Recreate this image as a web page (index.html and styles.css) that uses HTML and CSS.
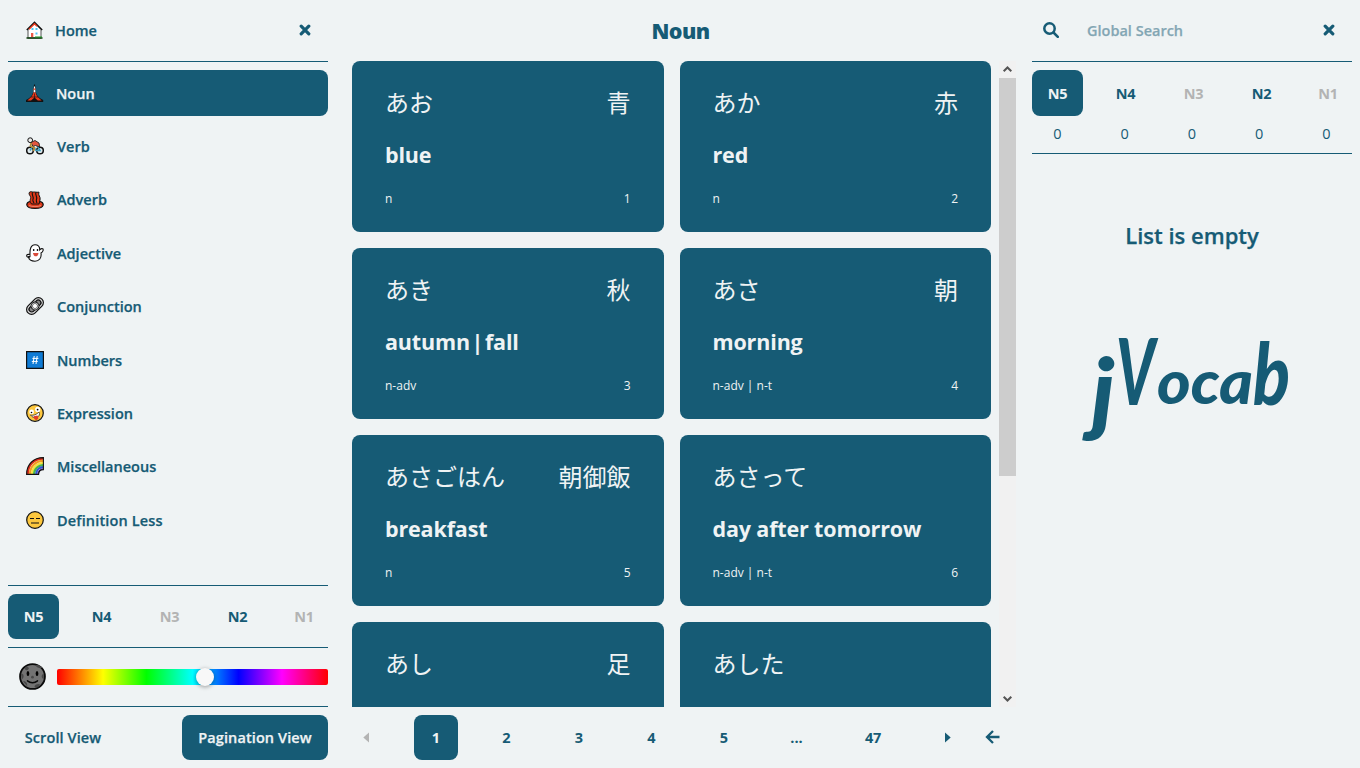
FILE: index.html
```html
<!DOCTYPE html>
<html lang="en">
<head>
<meta charset="utf-8">
<title>jVocab</title>
<link rel="stylesheet" href="styles.css">
</head>
<body>
<div class="app">
  <aside class="side">
    <header class="bar">
      <span class="emoji house"><svg viewBox="0 0 18 18"><path d="M2 8.500V17h13V8.500L8.500 2z" fill="#fff" stroke="#555" stroke-width="1"/><path d="M.8 9 8.500 1.200 16.200 9" fill="none" stroke="#111" stroke-width="1.500"/><path d="M3 8.200 8.500 2.700 11 5.200" fill="none" stroke="#ea3b1f" stroke-width="1.500"/><path d="M5.500 7h2v2h-2zM9.500 7h2v2h-2zM9.500 11.500h2v2h-2z" fill="#4fc8f5"/><path d="M5 12h2.300v4H5z" fill="#ea5a47"/><path d="M.5 17h16" stroke="#123f12" stroke-width="1.600"/><path d="M9 16h7" stroke="#1b9a22" stroke-width="1"/></svg></span>
      <span class="label home">Home</span>
      <svg class="close" viewBox="0 0 12 12"><path d="M2.200 2.200l7.600 7.600M9.800 2.200 2.200 9.800"/></svg>
    </header>
    <nav class="nav">
      <a class="item active"><span class="emoji"><svg viewBox="0 0 18 18"><path d="M8 .5h1l.9 8c.6 3 3.500 5.500 7.300 7.500v2H0v-2c3.800-2 6.500-4.500 7.100-7.500z" fill="#111"/><path d="M8 2.500h1l.5 6H7.500z" fill="#fff"/><path d="M7.500 4.500h2v1.300h-2z" fill="#e8381c"/><path d="M7.400 8.500h2.200c.5 3 2.800 5.500 6 8h-3.800L8.500 13.500 5 16.500H1.400c3.200-2.500 5.500-5 6-8z" fill="#e8381c"/><path d="M8.500 9.500v5M4.800 13h7.400" stroke="#111" stroke-width=".6"/></svg></span><span class="label noun">Noun</span></a>
      <a class="item"><span class="emoji"><svg viewBox="0 0 18 18"><circle cx="4" cy="13.500" r="3.300" fill="#dfe9ec" stroke="#111" stroke-width="1.500"/><circle cx="14" cy="13.500" r="3.300" fill="#dfe9ec" stroke="#111" stroke-width="1.500"/><path d="M4 13.500 7 9l3 4.500h4l-3-5" fill="none" stroke="#3f9fc0" stroke-width="1.500"/><path d="M5 5.500 9 3.500l4 2.500.7 4-4.200-1.500-2.500 1z" fill="#e2563f" stroke="#222" stroke-width=".9"/><path d="M5.300 5.500 4.500 9l4 2-1 3" fill="none" stroke="#b58a35" stroke-width="1.800"/><circle cx="4.200" cy="3.200" r="2.400" fill="#eee" stroke="#111"/></svg></span><span class="label">Verb</span></a>
      <a class="item"><span class="emoji"><svg viewBox="0 0 18 18"><path d="M4 10.500C1.500 11 .7 12.500.8 14c.4 2 4 3.400 8.200 3.400s7.800-1.400 8.200-3.400c.1-1.500-.8-3-3.200-3.500" fill="#df3919" stroke="#111" stroke-width="1.200"/><path d="M3.500 1.200c2-1.200 2.300 0 4-.2s2.500.5 5.500.2c-1.500 2.800 2 4.500 1 7.800L13 13H5.500c-3-4 0-5-1-7.300C3.600 4 2.400 2.600 3.500 1.200z" fill="#df3919" stroke="#111"/><path d="M6.500 1.300c-1.500 3 2 4 .4 7.500C6.500 10 7.500 11 8 12M10 1.300c-1.500 3 2 4 .4 7.500-.4 1.200.2 2 .6 3.200" fill="none" stroke="#111" stroke-width="1.100"/><path d="M3 14.500c3 1.500 9 1.500 12 0" fill="none" stroke="#f1a08c" stroke-width=".7"/></svg></span><span class="label adverb">Adverb</span></a>
      <a class="item"><span class="emoji"><svg viewBox="0 0 18 18"><path d="M9 .8c3 0 4.700 2 4.700 5 .8-.8 2-1.500 3-1 .9.600.600 2.700-1.700 4.200.800 5-2 8.200-6 8.200-3.500 0-6-1.200-6.500-4-1.500.2-2.200-1.200-1.600-2.300.600-.9 2.300-.4 3.100-.6C3.700 5 5 .8 9 .8z" fill="#fff" stroke="#111" stroke-width="1.100"/><path d="M1.500 12c1 .5 2-.4 3-1.500v2.500L3 14z" fill="#111"/><ellipse cx="7.700" cy="6" rx=".8" ry="1.100"/><ellipse cx="11.500" cy="6" rx=".8" ry="1.100"/><path d="M7 9h5.500c-.2 2-1.200 3.300-2.700 3.300S7.200 11 7 9z" fill="#d94b3b"/></svg></span><span class="label">Adjective</span></a>
      <a class="item"><span class="emoji"><svg viewBox="0 0 18 18"><g transform="rotate(-45 9 9)"><rect x="-.8" y="4" width="19.600" height="10" rx="5" fill="#ddd" stroke="#111" stroke-width="1.200"/><rect x="1.700" y="6.300" width="14.600" height="5.400" rx="2.700" fill="#888" stroke="#111" stroke-width="1.300"/><circle cx="9" cy="9" r="3.900" fill="#ddd" stroke="#111" stroke-width="1"/><circle cx="9" cy="9" r="2.500" fill="#fff" stroke="#333" stroke-width=".6"/></g></svg></span><span class="label">Conjunction</span></a>
      <a class="item"><span class="emoji"><svg viewBox="0 0 18 18"><path d="M.6.6h16.800v16.800H.6z" fill="#0f7bd5" stroke="#111" stroke-width="1.200"/><path d="M8.200 5 7 13M11.200 5 10 13M6.400 7.400h6M5.800 10.400h6" stroke="#fff" stroke-width="1"/></svg></span><span class="label">Numbers</span></a>
      <a class="item"><span class="emoji"><svg viewBox="0 0 18 18"><circle cx="9" cy="9" r="8.300" fill="#fcc73e" stroke="#111" stroke-width="1.200"/><path d="M4.500 11c3 1 6-.5 8.500-3 1.200 2.200.2 4.200-1.700 5.300-2.300 1-5 .3-6.800-2.300z" fill="#fff" stroke="#222" stroke-width=".7"/><path d="M7.500 12.300l4-.8c1 1.700 1.300 3.500-.5 4.200-2.200.8-3.200-1-3.500-3.400z" fill="#e23c28"/><circle cx="5.600" cy="7.900" r="2.400" fill="#fff"/><circle cx="11.700" cy="5.400" r="2.600" fill="#fff"/><circle cx="5.500" cy="8.500" r=".8"/><circle cx="11.600" cy="5.600" r=".9"/></svg></span><span class="label">Expression</span></a>
      <a class="item"><span class="emoji"><svg viewBox="0 0 18 18"><g fill="none" stroke-width="2.200"><path d="M1.700 17.500C1.700 8 8 1.700 17.500 1.700" stroke="#dc2c1c"/><path d="M3.900 17.500c0-8 5.600-13.600 13.600-13.600" stroke="#f29b22"/><path d="M6 17.500C6 11 11 6 17.500 6" stroke="#f5e23b"/><path d="M8.100 17.500c0-5.400 4-9.400 9.400-9.400" stroke="#48b649"/><path d="M10.200 17.500c0-4.300 3-7.300 7.300-7.300" stroke="#3156d8"/><path d="M12 17.500c0-3.200 2.300-5.500 5.500-5.500" stroke="#6a3fb5" stroke-width="1.500"/></g><path d="M.6 17.400C.6 7.400 7.400.6 17.400.6v12c-3 0-4.800 1.800-4.800 4.800z" fill="none" stroke="#111" stroke-width="1.100"/></svg></span><span class="label">Miscellaneous</span></a>
      <a class="item"><span class="emoji"><svg viewBox="0 0 18 18"><circle cx="9" cy="9" r="8.300" fill="#fcc73e" stroke="#111" stroke-width="1.200"/><path d="M4 7.500h4M10 7.500h4M5 12h8" stroke="#111" stroke-width="1.200"/></svg></span><span class="label less">Definition Less</span></a>
    </nav>
    <div class="levels row">
      <a class="level active">N5</a><a class="level">N4</a><a class="level off">N3</a><a class="level">N2</a><a class="level off last">N1</a>
    </div>
    <div class="hue row">
      <svg class="moon" viewBox="0 0 28 28"><circle cx="14" cy="14" r="12.900" fill="#737373" stroke="#0a0a0a" stroke-width="1.900"/><g fill="#484848"><circle cx="8" cy="5.500" r="2"/><path d="M17 2.200c1 3 5 4 7.500 2.500L20 2zM2 11c3-.5 4 4 1 6zM25.800 11c-3 1-3 5 0 6zM4 19c3-1 5 2 4.500 5zM16 25c0-2.500 4-4 6-2.500l-3 3z"/></g><ellipse cx="9.300" cy="11" rx="1.400" ry="2.600"/><ellipse cx="18.700" cy="11" rx="1.400" ry="2.600"/><circle cx="14" cy="14.700" r="1.400" fill="#484848"/><path d="M8.800 18.500c3 2.600 7.400 2.600 10.400 0" fill="none" stroke="#0a0a0a" stroke-width="1.500" stroke-linecap="round"/></svg>
      <div class="spectrum"><span class="knob"></span></div>
    </div>
    <div class="views row">
      <a class="view scroll">Scroll View</a><a class="view active">Pagination View</a>
    </div>
  </aside>

  <main class="main">
    <h1 class="title">Noun</h1>
    <div class="viewport">
      <div class="cards">
        <article class="card"><div class="jp"><span>あお</span><span>青</span></div><div class="mean"><span>blue</span></div><div class="meta"><span>n</span><span>1</span></div></article>
        <article class="card"><div class="jp"><span>あか</span><span>赤</span></div><div class="mean"><span>red</span></div><div class="meta"><span>n</span><span>2</span></div></article>
        <article class="card"><div class="jp"><span>あき</span><span>秋</span></div><div class="mean multi"><span>autumn | fall</span></div><div class="meta"><span>n-adv</span><span>3</span></div></article>
        <article class="card"><div class="jp"><span>あさ</span><span>朝</span></div><div class="mean"><span>morning</span></div><div class="meta"><span>n-adv | n-t</span><span>4</span></div></article>
        <article class="card"><div class="jp"><span>あさごはん</span><span>朝御飯</span></div><div class="mean"><span>breakfast</span></div><div class="meta"><span>n</span><span>5</span></div></article>
        <article class="card"><div class="jp"><span>あさって</span></div><div class="mean"><span>day after tomorrow</span></div><div class="meta"><span>n-adv | n-t</span><span>6</span></div></article>
        <article class="card"><div class="jp"><span>あし</span><span>足</span></div></article>
        <article class="card"><div class="jp"><span>あした</span></div></article>
      </div>
      <div class="scrollbar">
        <svg class="arrow" viewBox="0 0 17 17"><path d="M4.700 10.300 8.500 6.500l3.800 3.800"/></svg>
        <div class="track"><div class="thumb"></div></div>
        <svg class="arrow" viewBox="0 0 17 17"><path d="M4.700 6.700l3.800 3.800 3.800-3.800"/></svg>
      </div>
    </div>
    <footer class="pager">
      <a class="step prev"><svg viewBox="0 0 6 10"><path d="M6 0v10L.3 5z"/></svg></a>
      <a class="page active">1</a><a class="page">2</a><a class="page">3</a><a class="page">4</a><a class="page">5</a><a class="page">...</a><a class="page wide">47</a>
      <a class="step next"><svg viewBox="0 0 6 10"><path d="M0 0v10L5.700 5z"/></svg></a>
      <a class="back"><svg viewBox="0 0 16 16"><path d="M14.500 8H2.500M8 2 2 8l6 6"/></svg></a>
    </footer>
  </main>

  <aside class="side right">
    <header class="bar">
      <svg class="lens" viewBox="0 0 16 16"><circle cx="6.500" cy="6.500" r="5.200"/><path d="M10.500 10.500l4.300 4.300"/></svg>
      <span class="label search">Global Search</span>
      <svg class="close" viewBox="0 0 12 12"><path d="M2.200 2.200l7.600 7.600M9.800 2.200 2.200 9.800"/></svg>
    </header>
    <div class="levels">
      <a class="level active">N5</a><a class="level">N4</a><a class="level off">N3</a><a class="level">N2</a><a class="level off last">N1</a>
    </div>
    <div class="counts"><span>0</span><span>0</span><span>0</span><span>0</span><span>0</span></div>
    <p class="empty"><span>List is empty</span></p>
    <svg class="logo" viewBox="0 0 216 116">
      <text class="wordmark"><tspan x="11" y="90" font-size="91" textLength="24" lengthAdjust="spacingAndGlyphs">j</tspan><tspan x="36" y="71" font-size="92" textLength="39" lengthAdjust="spacingAndGlyphs">V</tspan><tspan x="77" y="70" font-size="60" textLength="96" lengthAdjust="spacingAndGlyphs">oca</tspan><tspan x="173" y="71" font-size="85" textLength="37" lengthAdjust="spacingAndGlyphs">b</tspan></text>
    </svg>
  </aside>
</div>
</body>
</html>
```
FILE: styles.css
```css
:root {
  --ink: #165b75;
  --paper: #eff3f4;
}
* { box-sizing: border-box; }
body {
  margin: 0;
  background: var(--paper);
  color: var(--ink);
  font: 600 14.5px "Open Sans", "Noto Sans", "Noto Sans CJK JP", sans-serif;
}
.app {
  display: grid;
  grid-template-columns: 336px 688px 336px;
  width: 1360px;
  height: 768px;
  overflow: hidden;
}
.side { display: flex; flex-direction: column; padding: 0 8px; min-height: 0; }
.bar {
  display: flex;
  align-items: center;
  height: 62px;
  padding: 0 16px;
  border-bottom: 1px solid var(--ink);
}
.emoji { display: flex; width: 18px; margin: 0 13px 0 2px; }
.emoji svg { width: 18px; height: 18px; }
.house { padding-bottom: 1px; }
.label, .view, .empty { -webkit-text-stroke: .25px currentColor; }
.home { margin-left: -2px; }
.noun { margin-left: -1px; }
.less { letter-spacing: .15px; }
.close { width: 12px; height: 12px; margin: 0 1.500px 1px auto; }
.close path { fill: none; stroke: var(--ink); stroke-width: 3.200; stroke-linecap: round; }
.nav { display: flex; flex-direction: column; gap: 7.900px; flex: 1; padding-top: 8px; }
.item {
  display: flex;
  align-items: center;
  height: 45.500px;
  padding: 0 16px;
  border-radius: 8px;
}
.item .label { padding-top: 1px; }
.item .adverb { padding-top: 0; }
.active { background: var(--ink); color: var(--paper); }
.row { border-top: 1px solid var(--ink); }
.levels { display: flex; justify-content: space-between; }
.levels.row { height: 62px; padding: 8px 0; }
.level {
  display: flex;
  align-items: center;
  justify-content: center;
  width: 51px;
  height: 45.500px;
  border-radius: 8px;
  font-weight: 700;
  letter-spacing: -.4px;
}
.levels.row .level { height: 45px; }
.last { width: 48px; }
.off { color: #b3b3b3; }
.hue { display: flex; align-items: center; height: 59px; padding-left: 11px; gap: 11px; }
.moon { width: 27px; height: 27px; flex: none; margin-bottom: 1px; }
.spectrum {
  position: relative;
  flex: 1;
  height: 16px;
  border-radius: 2px;
  background: linear-gradient(to right, #f00 0%, #ff0 17%, #0f0 33%, #0ff 50%, #00f 67%, #f0f 83%, #f00 100%);
}
.knob {
  position: absolute;
  left: 139px;
  top: -1px;
  width: 18px;
  height: 18px;
  border-radius: 50%;
  background: #f8f8f8;
  box-shadow: 0 1px 4px rgba(0, 0, 0, .37);
}
.views { display: flex; justify-content: space-between; height: 62px; padding: 8px 0; }
.view { display: flex; align-items: center; justify-content: center; height: 45px; border-radius: 8px; width: 146px; letter-spacing: .1px; white-space: nowrap; }
.scroll { width: 110px; }
.main { display: flex; flex-direction: column; padding: 0 8px 0 16px; min-width: 0; min-height: 0; }
.title { margin: 0; height: 61px; padding-right: 7px; line-height: 61px; text-align: center; font-size: 21.500px; font-weight: 800; letter-spacing: -.6px; }
.viewport { display: flex; gap: 8px; height: 646px; overflow: hidden; }
.cards { display: grid; grid-template-columns: 1fr 1fr; grid-auto-rows: 171px; gap: 16px; width: 639px; }
.card { padding: 24px 33px 0; border-radius: 8px; background: var(--ink); color: var(--paper); }
.jp { display: flex; justify-content: space-between; font: 400 24px/34px "Noto Sans CJK JP", sans-serif; }
.mean { margin-top: 19px; font-size: 21.500px; line-height: 34px; font-weight: 700; letter-spacing: -.15px; white-space: nowrap; }
.multi { word-spacing: -3.800px; }
.meta { display: flex; justify-content: space-between; margin-top: 18px; font-size: 12px; line-height: 18px; font-weight: 400; }
.scrollbar { display: flex; flex-direction: column; width: 17px; background: #f1f1f1; }
.arrow { width: 17px; height: 17px; flex: none; }
.arrow path { fill: none; stroke: #555; stroke-width: 2; }
.track { flex: 1; }
.thumb { height: 398px; background: #cdcdcd; }
.pager { display: flex; align-items: center; gap: 28.500px; height: 61px; font-weight: 700; }
.step { display: flex; justify-content: center; width: 28px; margin-right: 5.500px; margin-bottom: 1px; }
.step svg { width: 6px; height: 11px; fill: var(--ink); }
.prev svg { fill: #b3b3b3; }
.page { display: flex; align-items: center; justify-content: center; width: 44px; height: 45px; border-radius: 8px; }
.page.active { margin-right: -2px; }
.wide { width: 52px; letter-spacing: -.3px; }
.next { width: 41px; margin-right: 0; }
.back { display: flex; margin: 0 0 1px -12px; }
.back svg { width: 16px; height: 16px; }
.back path { fill: none; stroke: var(--ink); stroke-width: 2.300; }
.lens { width: 16px; height: 16px; margin: 0 28px 1px -5px; }
.lens circle, .lens path { fill: none; stroke: var(--ink); stroke-width: 2.500; stroke-linecap: round; }
.search { opacity: .5; }
.right .levels { padding-top: 8px; }
.right .level { padding-top: 1px; }
.counts { display: flex; justify-content: space-between; height: 38px; border-bottom: 1px solid var(--ink); font-weight: 400; line-height: 36px; }
.counts span { width: 51px; text-align: center; }
.empty { margin: 64px 0 0; text-align: center; font-size: 22px; line-height: 35px; }
.logo { width: 216px; height: 116px; margin: 81px auto 0 48px; overflow: visible; }
.wordmark { fill: var(--ink); font-family: "Lato", sans-serif; font-weight: 900; font-style: italic; }
```
